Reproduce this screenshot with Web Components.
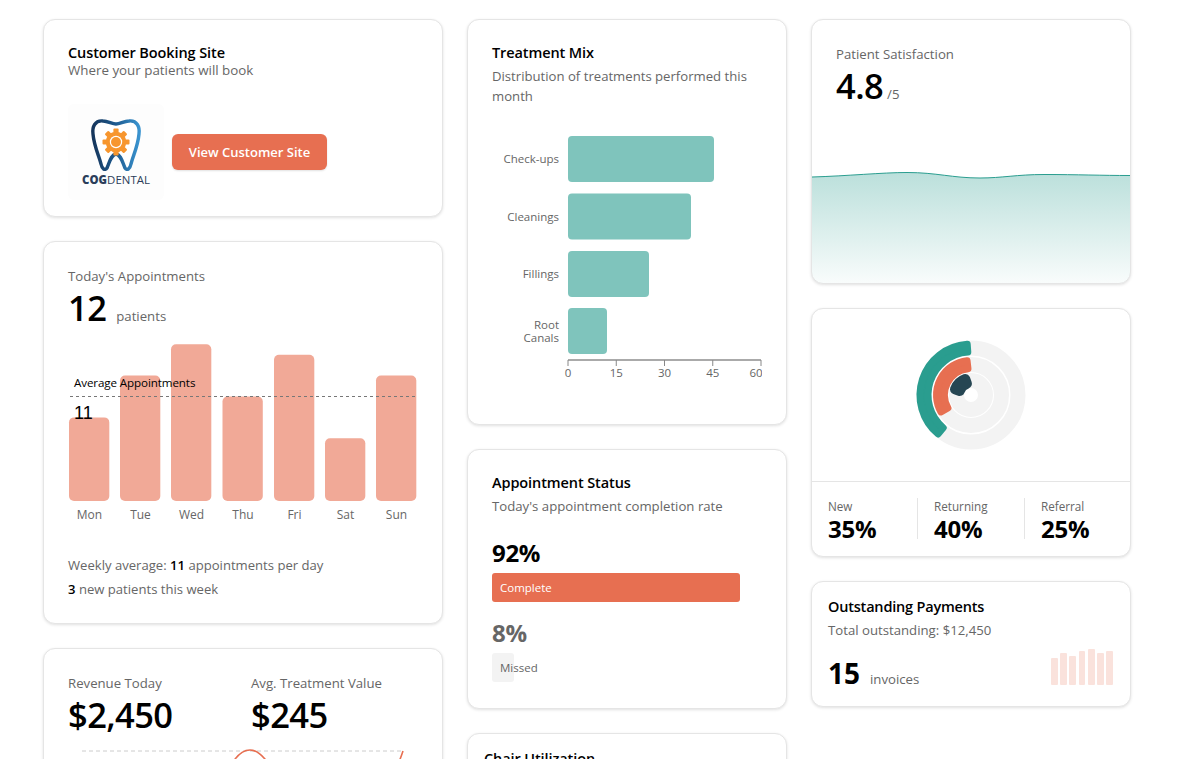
<!DOCTYPE html>
<html>
<head>
<meta charset="utf-8">
<title>Dental Dashboard</title>
<style>
html, body { margin: 0; height: 100%; overflow: hidden; background: #fff; }
body { font-family: "Open Sans", "Noto Sans", sans-serif; color: #000; }
</style>
</head>
<body>
<dash-board>
    <dash-column>
        <booking-card></booking-card>
        <appointments-card></appointments-card>
        <revenue-card></revenue-card>
    </dash-column>
    <dash-column>
        <treatment-card></treatment-card>
        <status-card></status-card>
        <chair-card></chair-card>
    </dash-column>
    <dash-column>
        <satisfaction-card></satisfaction-card>
        <sources-card></sources-card>
        <payments-card></payments-card>
    </dash-column>
</dash-board>

<script>
const TEXT_CSS = `
.title { font-size: 14.5px; line-height: 17px; font-weight: 600; color: #000; letter-spacing: -0.1px; }
.sub { font-size: 13.2px; line-height: 20px; color: #666; }
.label { font-size: 13.2px; line-height: 20px; color: #666; }
.big { font-size: 34.5px; line-height: 44px; font-weight: 600; color: #000; letter-spacing: -0.6px; }
.unit { font-size: 13.2px; color: #666; }
svg { display: block; }
svg text { font-family: "Open Sans", "Noto Sans", sans-serif; }
`;

class DashBoard extends HTMLElement {
    constructor() {
        super();
        this.attachShadow({mode:"open"}).innerHTML = `
<style>
:host { display: grid; grid-template-columns: 400px 320px 320px; gap: 24px; padding: 19px 0 0 43px; align-items: start; }
</style>
<slot></slot>
`;
    }
}

class DashColumn extends HTMLElement {
    constructor() {
        super();
        this.attachShadow({mode:"open"}).innerHTML = `
<style>
:host { display: flex; flex-direction: column; gap: 24px; min-width: 0; }
</style>
<slot></slot>
`;
    }
}

class DashCard extends HTMLElement {
    constructor() {
        super();
        this.attachShadow({mode:"open"}).innerHTML = `
<style>
:host {
    display: block;
    box-sizing: border-box;
    background: #fff;
    border: 1px solid #e5e5e5;
    border-radius: 12px;
    box-shadow: 0 1px 3px rgba(0,0,0,0.12);
    overflow: hidden;
    padding: var(--pad, 24px);
}
</style>
<slot></slot>
`;
    }
}

class BookingCard extends HTMLElement {
    constructor() {
        super();
        this.attachShadow({mode:"open"}).innerHTML = `
<style>
${TEXT_CSS}
:host { display: block; --pad: 24px 24px 16px; }
.sub { font-size: 13.35px; line-height: 18px; }
.row { display: flex; align-items: center; gap: 8px; margin-top: 25px; }
.logo { width: 96px; height: 96px; background: #fdfdfd; border-radius: 6px; }
button {
    width: 155px; height: 36px; border: 0; border-radius: 6px; padding: 0;
    background: #e76f51; color: #fff;
    font: 600 13px "Open Sans", "Noto Sans", sans-serif;
    box-shadow: 0 1px 2px rgba(0,0,0,0.12);
}
</style>
<dash-card>
    <div class="title">Customer Booking Site</div>
    <div class="sub">Where your patients will book</div>
    <div class="row">
        <svg class="logo" viewBox="0 0 96 96">
            <defs>
                <linearGradient id="toothStroke" x1="0" x2="1" y1="0" y2="0">
                    <stop offset="0" stop-color="#16365c"/>
                    <stop offset="0.5" stop-color="#1d5a8f"/>
                    <stop offset="1" stop-color="#3a94d0"/>
                </linearGradient>
            </defs>
            <path d="M35 17 C27 16 24 23 25 30 C26 42 31 52 33 60 C34 65 37 67 39 64 C42 57 43 51 48 50 C53 51 54 57 57 64 C59 67 62 65 63 60 C65 52 70 42 71 30 C72 23 69 16 61 17 C56 17 52 20 48 20 C44 20 40 17 35 17 Z"
                  fill="#fff" stroke="url(#toothStroke)" stroke-width="3.4" stroke-linejoin="round"/>
            <g transform="translate(48 38)" fill="#f7962e">
                <rect x="-2.6" y="-13.5" width="5.2" height="27" rx="1"/>
                <rect x="-2.6" y="-13.5" width="5.2" height="27" rx="1" transform="rotate(45)"/>
                <rect x="-2.6" y="-13.5" width="5.2" height="27" rx="1" transform="rotate(90)"/>
                <rect x="-2.6" y="-13.5" width="5.2" height="27" rx="1" transform="rotate(135)"/>
                <circle r="10.3"/>
                <circle r="6.2" fill="#fff"/>
                <circle r="5" fill="#f7962e"/>
            </g>
            <text x="48" y="80" text-anchor="middle" font-size="11.4" fill="#2b3d5a" textLength="68" lengthAdjust="spacing"><tspan font-weight="800">COG</tspan>DENTAL</text>
        </svg>
        <button>View Customer Site</button>
    </div>
</dash-card>
`;
    }
}

class AppointmentsCard extends HTMLElement {
    constructor() {
        super();
        const data = [["Mon",8,69],["Tue",12,120],["Wed",15,171],["Thu",10,222.5],["Fri",14,274],["Sat",6,325],["Sun",12,376]];
        const bars = data.map(([d,v,x]) => {
            const h = v * 10.45;
            return `<rect x="${x-68}" y="${161-h}" width="40.3" height="${h}" rx="5" fill="#e76f51" fill-opacity="0.6"/>
<text x="${x-68+20.5}" y="179" text-anchor="middle" font-size="12" fill="#666">${d}</text>`;
        }).join("");
        this.attachShadow({mode:"open"}).innerHTML = `
<style>
${TEXT_CSS}
:host { display: block; --pad: 24px 24px 22px; }
.row { display: flex; align-items: baseline; gap: 10px; }
svg { margin-top: 10px; }
.foot { margin-top: 23px; font-size: 13.1px; line-height: 24px; color: #666; }
b { color: #000; font-weight: 600; }
</style>
<dash-card>
    <div class="label">Today's Appointments</div>
    <div class="row"><span class="big">12</span><span class="unit">patients</span></div>
    <svg width="350" height="190" viewBox="0 0 350 190">
        ${bars}
        <line x1="2" x2="348" y1="56.5" y2="56.5" stroke="#777" stroke-dasharray="3 3"/>
        <text x="6" y="47" font-size="11.6" fill="#000" letter-spacing="-0.1">Average Appointments</text>
        <text x="6" y="79" font-size="18" fill="#000" style="font-family:'Liberation Sans',sans-serif">11</text>
    </svg>
    <div class="foot">
        <div>Weekly average: <b>11</b> appointments per day</div>
        <div><b>3</b> new patients this week</div>
    </div>
</dash-card>
`;
    }
}

class RevenueCard extends HTMLElement {
    constructor() {
        super();
        this.attachShadow({mode:"open"}).innerHTML = `
<style>
${TEXT_CSS}
:host { display: block; }
.cols { display: grid; grid-template-columns: 183px 1fr; }
</style>
<dash-card>
    <div class="cols">
        <div><div class="label">Revenue Today</div><div class="big">$2,450</div></div>
        <div><div class="label">Avg. Treatment Value</div><div class="big">$245</div></div>
    </div>
    <svg width="350" height="90" viewBox="0 0 350 90">
        <line x1="14" x2="335" y1="14" y2="14" stroke="#ccc" stroke-dasharray="4 3"/>
        <path d="M14 80 C90 78 140 70 155 45 C162 28 170 13 182 13 C194 13 203 30 215 50 C240 75 310 70 326 36 C330 28 333 20 335 14" fill="none" stroke="#e76f51" stroke-width="1.6"/>
    </svg>
</dash-card>
`;
    }
}

class TreatmentCard extends HTMLElement {
    constructor() {
        super();
        const rows = [["Check-ups",146,10],["Cleanings",123,67.5],["Fillings",81,125],["Root Canals",39,182]];
        const bars = rows.map(([n,w,y]) => {
            const words = n.split(" ");
            const label = words.length > 1
                ? `<text x="67" y="${y+21}" text-anchor="end" font-size="11.5" fill="#666">${words[0]}</text><text x="67" y="${y+34}" text-anchor="end" font-size="11.5" fill="#666">${words[1]}</text>`
                : `<text x="67" y="${y+27}" text-anchor="end" font-size="11.5" fill="#666">${n}</text>`;
            return `<rect x="76" y="${y}" width="${w}" height="46" rx="4" fill="#2a9d8f" fill-opacity="0.6"/>${label}`;
        }).join("");
        const ticks = [0,15,30,45,60].map((t,i) => {
            const x = 76 + i * 48.25;
            return `<line x1="${x}" x2="${x}" y1="234" y2="240" stroke="#888"/><text x="${i == 4 ? x-5 : x}" y="251" text-anchor="middle" font-size="11.5" fill="#666">${t}</text>`;
        }).join("");
        this.attachShadow({mode:"open"}).innerHTML = `
<style>
${TEXT_CSS}
:host { display: block; }
.sub { font-size: 13.15px; margin-top: 5px; }
svg { margin-top: 20px; }
</style>
<dash-card>
    <div class="title">Treatment Mix</div>
    <div class="sub">Distribution of treatments performed this month</div>
    <svg width="270" height="274" viewBox="0 0 270 274">
        ${bars}
        <line x1="76" x2="269" y1="234" y2="234" stroke="#aaa" stroke-width="2"/>
        ${ticks}
    </svg>
</dash-card>
`;
    }
}

class StatusCard extends HTMLElement {
    constructor() {
        super();
        this.attachShadow({mode:"open"}).innerHTML = `
<style>
${TEXT_CSS}
:host { display: block; --pad: 24px 24px 26px; }
.sub { margin-top: 5px; }
.pct { font-size: 24px; line-height: 32px; font-weight: 700; margin-top: 21px; letter-spacing: -0.3px; }
.pct.off { color: #666; margin-top: 15px; }
.bar { height: 29px; margin-top: 4px; border-radius: 3px; box-sizing: border-box; padding-left: 8px;
    font-size: 11.5px; line-height: 29px; white-space: nowrap; }
.done { width: 248px; background: #e76f51; color: #fff; }
.miss { width: 22px; background: #f3f3f3; color: #666; }
</style>
<dash-card>
    <div class="title">Appointment Status</div>
    <div class="sub">Today's appointment completion rate</div>
    <div class="pct">92%</div>
    <div class="bar done">Complete</div>
    <div class="pct off">8%</div>
    <div class="bar miss">Missed</div>
</dash-card>
`;
    }
}

class ChairCard extends HTMLElement {
    constructor() {
        super();
        this.attachShadow({mode:"open"}).innerHTML = `
<style>
${TEXT_CSS}
:host { display: block; --pad: 16px; }
dash-card { height: 200px; }
</style>
<dash-card>
    <div class="title">Chair Utilization</div>
</dash-card>
`;
    }
}

class SatisfactionCard extends HTMLElement {
    constructor() {
        super();
        this.attachShadow({mode:"open"}).innerHTML = `
<style>
${TEXT_CSS}
:host { display: block; --pad: 0; }
.head { padding: 24px 24px 0; }
.row { display: flex; align-items: baseline; gap: 4px; }
svg { margin-top: 62px; }
</style>
<dash-card>
    <div class="head">
        <div class="label">Patient Satisfaction</div>
        <div class="row"><span class="big">4.8</span><span class="unit">/5</span></div>
    </div>
    <svg width="318" height="113" viewBox="0 0 318 113">
        <defs>
            <linearGradient id="satFill" x1="0" x2="0" y1="0" y2="1">
                <stop offset="0" stop-color="#2a9d8f" stop-opacity="0.32"/>
                <stop offset="1" stop-color="#2a9d8f" stop-opacity="0.03"/>
            </linearGradient>
        </defs>
        <path d="M0 7 C35 6 70 2.5 95 2.5 C125 2.5 140 8 168 8 C190 8 205 4.5 232 4.5 C265 4.5 290 5.5 318 5.5 L318 113 L0 113 Z" fill="url(#satFill)"/>
        <path d="M0 7 C35 6 70 2.5 95 2.5 C125 2.5 140 8 168 8 C190 8 205 4.5 232 4.5 C265 4.5 290 5.5 318 5.5" fill="none" stroke="#2a9d8f" stroke-width="1"/>
    </svg>
</dash-card>
`;
    }
}

class SourcesCard extends HTMLElement {
    // annular sector with rounded corners, measured counter-clockwise from 12 o'clock
    sector(r0, r1, deg, c) {
        const pt = (r, a) => {
            const t = a * Math.PI / 180;
            return (159 - r * Math.sin(t)).toFixed(2) + " " + (86 - r * Math.cos(t)).toFixed(2);
        };
        const a0 = (c / ((r0 + r1) / 2)) * 180 / Math.PI;
        const o = r1 - c, i = r0 + c;
        const large = deg > 180 ? 1 : 0;
        return `<path d="M${pt(o,a0)} A${o} ${o} 0 ${large} 0 ${pt(o,deg-a0)} L${pt(i,deg-a0)} A${i} ${i} 0 ${large} 1 ${pt(i,a0)} Z" stroke-width="${c*2}" stroke-linejoin="round"`;
    }

    constructor() {
        super();
        const ring = (r0, r1) => `<circle cx="159" cy="86" r="${(r0+r1)/2}" fill="none" stroke="#f3f3f3" stroke-width="${r1-r0}"/>`;
        this.attachShadow({mode:"open"}).innerHTML = `
<style>
${TEXT_CSS}
:host { display: block; --pad: 0; }
.stats { display: grid; grid-template-columns: 89px 107px 1fr; padding: 16px 0 17px 16px; border-top: 1px solid #e5e5e5; }
.stat { height: 41px; }
.stat + .stat { border-left: 1px solid #e5e5e5; padding-left: 16px; }
.name { font-size: 11.7px; line-height: 17px; color: #666; }
.val { font-size: 24px; line-height: 28px; font-weight: 700; letter-spacing: -0.2px; }
</style>
<dash-card>
    <svg width="318" height="172" viewBox="0 0 318 172">
        ${ring(39.5,54.5)}${ring(23,38)}${ring(7,22)}
        ${this.sector(39.5,54.5,144,3.5)} fill="#2a9d8f" stroke="#2a9d8f"/>
        ${this.sector(23,38,126,3.5)} fill="#e76f51" stroke="#e76f51"/>
        ${this.sector(7,22,90,5)} fill="#264653" stroke="#264653"/>
    </svg>
    <div class="stats">
        <div class="stat"><div class="name">New</div><div class="val">35%</div></div>
        <div class="stat"><div class="name">Returning</div><div class="val">40%</div></div>
        <div class="stat"><div class="name">Referral</div><div class="val">25%</div></div>
    </div>
</dash-card>
`;
    }
}

class PaymentsCard extends HTMLElement {
    constructor() {
        super();
        const mini = [27,32,29,34,36,32,34].map(h => `<i style="height:${h}px"></i>`).join("");
        this.attachShadow({mode:"open"}).innerHTML = `
<style>
${TEXT_CSS}
:host { display: block; --pad: 16px; }
.title { letter-spacing: -0.2px; }
.sub { margin-top: 5px; }
.row { display: flex; justify-content: space-between; align-items: flex-end; margin-top: 9px; }
.num { display: flex; align-items: baseline; gap: 10px; }
.count { font-size: 28px; line-height: 33px; font-weight: 700; }
.mini { display: flex; align-items: flex-end; gap: 2.4px; margin: 0 1px 5px 0; }
i { display: block; width: 6.8px; background: #e76f51; opacity: 0.2; border-radius: 1px; }
</style>
<dash-card>
    <div class="title">Outstanding Payments</div>
    <div class="sub">Total outstanding: $12,450</div>
    <div class="row">
        <div class="num"><span class="count">15</span><span class="unit">invoices</span></div>
        <div class="mini">${mini}</div>
    </div>
</dash-card>
`;
    }
}

customElements.define("dash-board", DashBoard);
customElements.define("dash-column", DashColumn);
customElements.define("dash-card", DashCard);
customElements.define("booking-card", BookingCard);
customElements.define("appointments-card", AppointmentsCard);
customElements.define("revenue-card", RevenueCard);
customElements.define("treatment-card", TreatmentCard);
customElements.define("status-card", StatusCard);
customElements.define("chair-card", ChairCard);
customElements.define("satisfaction-card", SatisfactionCard);
customElements.define("sources-card", SourcesCard);
customElements.define("payments-card", PaymentsCard);
</script>
</body>
</html>
